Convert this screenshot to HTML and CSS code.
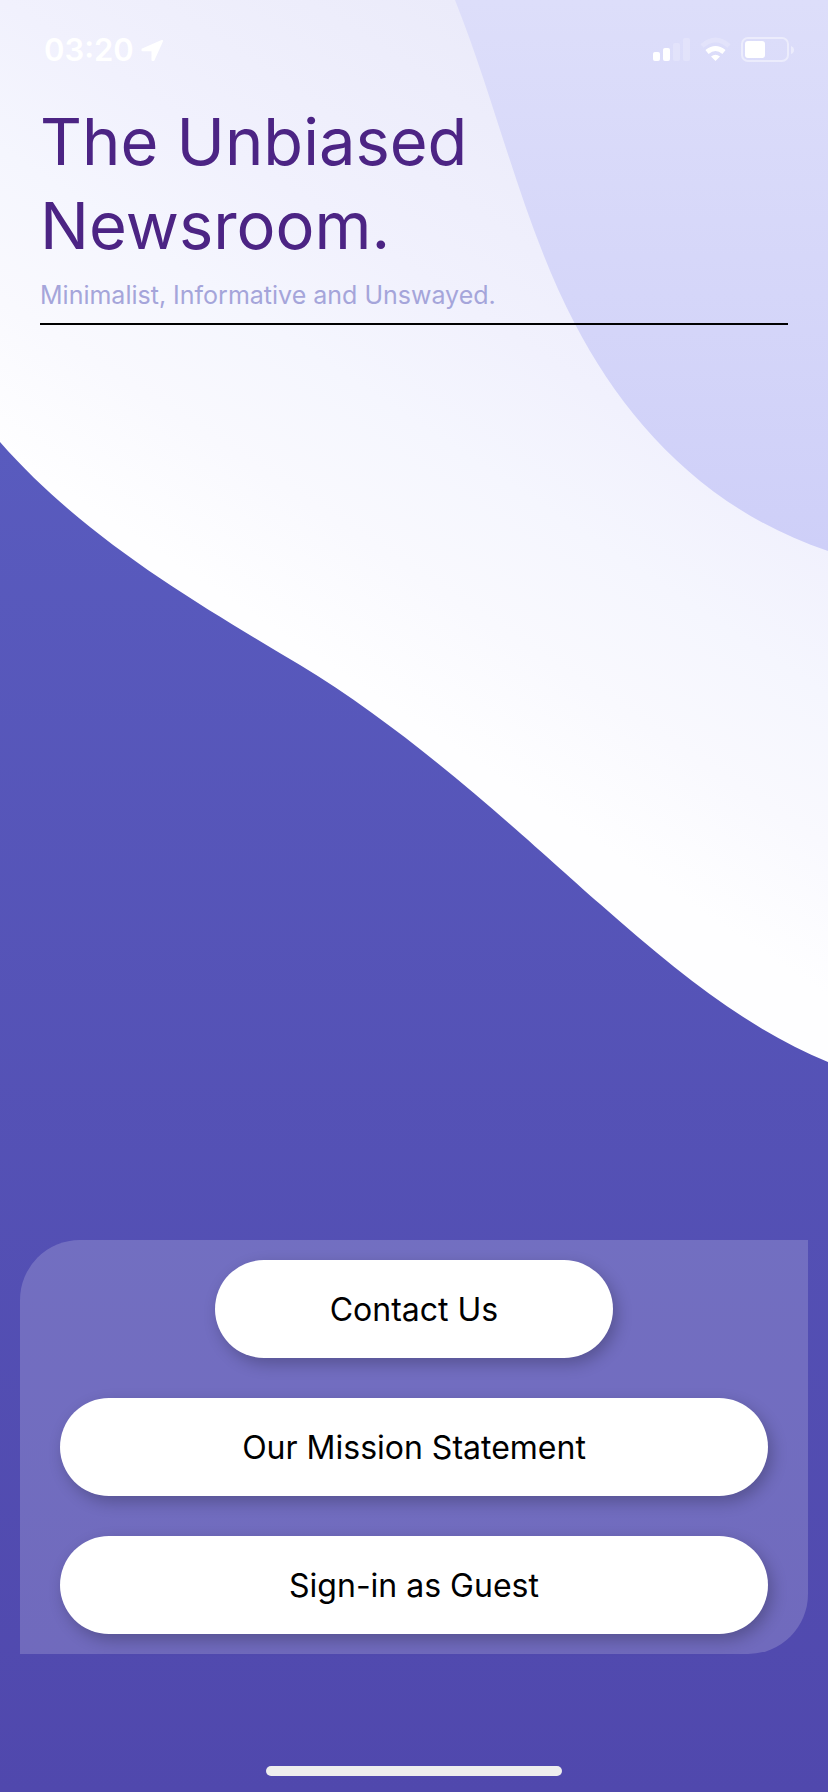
FILE: index.html
```html
<!DOCTYPE html>
<html lang="en">
<head>
<meta charset="utf-8">
<meta name="viewport" content="width=device-width, initial-scale=1">
<title>The Unbiased Newsroom</title>
<link rel="stylesheet" href="styles.css">
</head>
<body class="screen">
<svg class="backdrop" viewBox="0 0 828 1792" preserveAspectRatio="none" aria-hidden="true">
  <defs>
    <linearGradient id="mist" gradientUnits="userSpaceOnUse" x1="455" y1="0" x2="110" y2="522">
      <stop offset="0" stop-color="#ebebfa"/>
      <stop offset=".4" stop-color="#f1f1fd"/>
      <stop offset=".6" stop-color="#f5f6fe"/>
      <stop offset=".8" stop-color="#f9f9fe"/>
      <stop offset="1" stop-color="#fefeff"/>
    </linearGradient>
    <linearGradient id="lilac" gradientUnits="userSpaceOnUse" x1="0" y1="0" x2="0" y2="551">
      <stop offset="0" stop-color="#dddefa"/>
      <stop offset="1" stop-color="#cecff8"/>
    </linearGradient>
    <linearGradient id="violet" gradientUnits="userSpaceOnUse" x1="0" y1="442" x2="0" y2="1792">
      <stop offset="0" stop-color="#595bbe"/>
      <stop offset="1" stop-color="#5048ad"/>
    </linearGradient>
  </defs>
  <path fill="url(#mist)" d="M0 0H828V1792H0Z"/>
  <path fill="url(#lilac)" d="M455 0C497 105 523 225 575 324C625 420 705 510 828 551V0Z"/>
  <path fill="url(#violet)" d="M0 442C86 540 200 605 300 665C420 737 540 852 600 904C680 975 750 1030 828 1062V1792H0Z"/>
</svg>

<div class="status">
  <div class="status-side">
    <span class="time">03:20</span>
    <svg class="arrow" viewBox="0 0 24 24" width="24" height="24" aria-hidden="true"><path fill="#fff" stroke="#fff" stroke-width="2" stroke-linejoin="round" d="M22 3L2.500 11.500V12.300H12.500V22H13.500Z"/></svg>
  </div>
  <svg class="signals" viewBox="0 0 142 26" width="142" height="26" aria-hidden="true">
    <g fill="#fff">
      <rect x="0" y="15" width="7" height="9" rx="2"/>
      <rect x="10" y="11" width="7" height="13" rx="2"/>
      <rect x="20" y="6" width="7" height="18" rx="2" opacity=".2"/>
      <rect x="30" y="1" width="7" height="23" rx="2" opacity=".2"/>
      <path d="M62.500 24L58 19.500Q62.500 16 67 19.500Z"/>
      <rect x="92" y="4" width="20" height="17" rx="3"/>
      <path opacity=".45" d="M138 9Q141 10 141 13Q141 16 138 17Z"/>
    </g>
    <g fill="none" stroke="#fff">
      <path stroke-width="5" d="M54 15Q62.500 8 71 15"/>
      <path stroke-width="5" opacity=".2" d="M49 9Q62.500-3 76 9"/>
      <rect x="89" y="1" width="46" height="23" rx="6" stroke-width="2" opacity=".45"/>
    </g>
  </svg>
</div>

<header class="intro">
  <h1 class="title">The Unbiased Newsroom.</h1>
  <p class="tagline">Minimalist, Informative and Unswayed.</p>
</header>

<main class="panel">
  <button class="pill pill-short" type="button">Contact Us</button>
  <button class="pill" type="button">Our Mission Statement</button>
  <button class="pill" type="button">Sign-in as Guest</button>
</main>

<div class="home-bar"></div>
</body>
</html>
```
FILE: styles.css
```css
* {
  box-sizing: border-box;
}

.screen {
  position: relative;
  display: flex;
  flex-direction: column;
  min-height: 100vh;
  margin: 0;
  font-family: Inter, "Liberation Sans", sans-serif;
}

.backdrop {
  position: absolute;
  inset: 0;
  z-index: -1;
  width: 100%;
  height: 100%;
}

.status {
  display: flex;
  align-items: center;
  justify-content: space-between;
  height: 100px;
  padding: 0 33px 0 44px;
}

.status-side {
  display: flex;
  align-items: center;
  gap: 6px;
}

.time {
  color: #fff;
  font-size: 31px;
  font-weight: 600;
  line-height: 40px;
}

.intro {
  margin: 0 40px;
  border-bottom: 2px solid #000;
}

.title {
  max-width: 520px;
  margin: 0;
  color: #4c2484;
  font-size: 65px;
  font-weight: 400;
  line-height: 84px;
}

.tagline {
  margin: 11px 0 12px;
  color: #a5a5da;
  font-size: 25px;
  line-height: 32px;
}

.panel {
  display: flex;
  flex-direction: column;
  align-items: center;
  gap: 40px;
  margin: auto 20px 112px;
  padding: 20px 40px;
  border-radius: 60px 0;
  background: rgba(255, 255, 255, 0.18);
}

.pill {
  width: 100%;
  height: 98px;
  border: 0;
  border-radius: 49px;
  background: #fff;
  box-shadow: 4px 6px 16px rgba(0, 0, 0, 0.24);
  color: #000;
  font-family: inherit;
  font-size: 32px;
}

.pill-short {
  max-width: 398px;
}

.home-bar {
  align-self: center;
  width: 296px;
  height: 10px;
  margin-bottom: 16px;
  border-radius: 5px;
  background: #eee;
}
```
